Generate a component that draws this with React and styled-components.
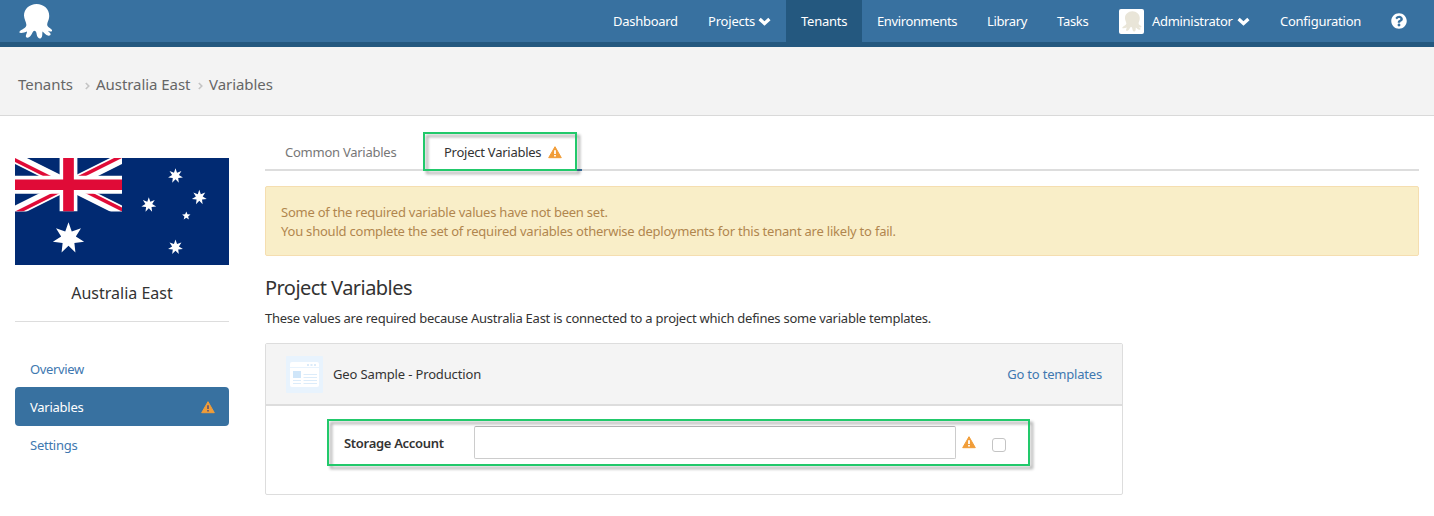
import React from 'react';
import styled, { createGlobalStyle } from 'styled-components';
import { FaQuestionCircle } from 'react-icons/fa';

const Global = createGlobalStyle`
  * { box-sizing: border-box; }
  body {
    margin: 0;
    background: #fff;
    color: #333;
    font-family: 'Noto Sans', 'Open Sans', sans-serif;
    font-size: 13px;
    line-height: 19px;
  }
`;

const Label = styled.span`
  white-space: nowrap;
  letter-spacing: ${(p) => p.$ls || 0}px;
`;

const Page = styled.div`
  position: relative;
  height: 516px;
  overflow: hidden;
`;

const TopBar = styled.header`
  display: flex;
  justify-content: space-between;
  height: 47px;
  padding: 0 12px 0 19px;
  background: #3871a0;
  border-bottom: 5px solid #24587f;
`;

const Logo = styled.svg`
  display: block;
  margin-top: 4px;
`;

const Nav = styled.nav`
  display: flex;
`;

const NavItem = styled.a`
  display: flex;
  align-items: center;
  gap: ${(p) => p.$gap || 3}px;
  width: ${(p) => p.$w}px;
  padding: 0 0 0 15px;
  height: 42px;
  color: #fff;
  background: ${(p) => (p.$active ? '#24587f' : 'transparent')};
`;

const Avatar = styled.span`
  display: flex;
  align-items: center;
  justify-content: center;
  flex: none;
  width: 25px;
  height: 25px;
  margin-right: 4px;
  border-radius: 2px;
  background: #fff;
`;

const CrumbBar = styled.div`
  display: flex;
  align-items: center;
  height: 69px;
  padding: 6px 18px 0;
  background: #f3f3f3;
  border-bottom: 1px solid #d9d9d9;
  color: #666;
  font-size: 15px;
`;

const Crumb = styled.span`
  width: ${(p) => p.$w}px;
  white-space: nowrap;
  letter-spacing: -0.05px;
`;

const Divider = styled.svg`
  flex: none;
  margin-top: 3px;
  margin-right: 6px;
`;

const Body = styled.div`
  display: grid;
  grid-template-columns: 214px 1154px;
  column-gap: 36px;
  padding-left: 15px;
`;

const Sidebar = styled.aside`
  padding-top: 42px;
`;

const TenantName = styled.h2`
  margin: 0;
  height: 57px;
  padding-top: 16px;
  border-bottom: 1px solid #ddd;
  text-align: center;
  font-size: 16px;
  font-weight: 400;
  line-height: 24px;
`;

const Menu = styled.div`
  display: flex;
  flex-direction: column;
  margin-top: 27px;
`;

const MenuItem = styled.a`
  display: flex;
  align-items: center;
  justify-content: space-between;
  height: ${(p) => (p.$active ? 39 : 38)}px;
  padding: 2px 14px 0 15px;
  border-radius: 4px;
  color: ${(p) => (p.$active ? '#fff' : '#4078b0')};
  background: ${(p) => (p.$active ? '#3871a0' : 'transparent')};

  &:last-child {
    padding-top: 0;
  }
`;

const Main = styled.main`
  padding-top: 16px;
`;

const Tabs = styled.div`
  display: flex;
  height: 39px;
  border-bottom: 2px solid #ddd;
`;

const Tab = styled.div`
  display: flex;
  gap: 7px;
  width: ${(p) => p.$w}px;
  height: 39px;
  padding: 11px 0 0 20px;
  color: ${(p) => (p.$active ? '#333' : '#777')};
  border-bottom: 2px solid ${(p) => (p.$active ? '#3871a0' : 'transparent')};
`;

const Alert = styled.div`
  height: 70px;
  margin-top: 15px;
  padding: 16px 15px;
  display: flex;
  flex-direction: column;
  border: 1px solid #f5deb0;
  border-radius: 2px;
  background: #f9eec8;
  color: #b1864e;
`;

const Heading = styled.h1`
  margin: 18px 0 0;
  font-size: 20px;
  font-weight: 400;
  line-height: 28px;
`;

const Intro = styled.p`
  margin: 7px 0 0;
`;

const Panel = styled.section`
  width: 858px;
  height: 152px;
  margin-top: 15px;
  border: 1px solid #ddd;
  border-radius: 2px;
`;

const PanelHead = styled.div`
  display: flex;
  align-items: center;
  height: 62px;
  padding: 0 20px;
  background: #f4f4f4;
  border-bottom: 2px solid #ddd;
`;

const ProjectIcon = styled.svg`
  flex: none;
  margin-right: 10px;
`;

const PanelLink = styled.a`
  margin-left: auto;
  color: #4078b0;
`;

const FieldRow = styled.div`
  display: flex;
  align-items: center;
  padding: 20px 0 0 78px;
`;

const FieldLabel = styled.label`
  width: 130px;
  padding-top: 2px;
  font-weight: 600;
  white-space: nowrap;
  letter-spacing: -0.3px;
`;

const Input = styled.input`
  width: 482px;
  height: 33px;
  margin: 0 6px 0 0;
  border: 1px solid #ccc;
  border-top-color: #b5b5b5;
  border-radius: 2px;
  background: #fff;
`;

const Check = styled.span`
  width: 14px;
  height: 14px;
  margin: 5px 0 0 16px;
  border: 1px solid #c4c4c4;
  border-radius: 3px;
`;

const Highlight = styled.div`
  position: absolute;
  left: ${(p) => p.$x}px;
  top: ${(p) => p.$y}px;
  width: ${(p) => p.$w}px;
  height: ${(p) => p.$h}px;
  border: 2px solid #22c96b;
  filter: drop-shadow(3px 3px 1.5px rgba(0, 0, 0, 0.36));
  pointer-events: none;
`;

const OCTOPUS =
  'M17.600 0C10.500 0 5 5 5 11.500C5 15.500 7.800 18.500 7.300 21.500C6.800 24 3 25.500 1.200 26.800C-0.200 28 0.400 29.300 2.300 29C4.300 28.800 6.300 28.300 8 27.500C8.200 29.500 6.300 31 7 33C8 34.500 10.600 33.700 12 31.300C13.200 29.500 13.700 27 15.500 26.700C17.300 26.900 17.500 29 17.800 31C18.400 33.700 20 34.800 21.500 34.400C23.900 33.500 23.100 29.500 23.500 27.600C25 28.400 26.500 31.300 29.500 31.700C31.700 31.800 32.100 30.200 31.100 29C30.300 28 29.300 27.500 28.800 26.700C30.100 27 32 28.200 33 27C33.600 25.500 31.500 24.700 30 23.500C27.500 21.700 28 19.800 29 17.300C30 15 30.200 13.500 30.200 11.500C30.200 5 24.700 0 17.600 0Z';

function Chevron() {
  return (
    <svg width="13" height="9" viewBox="0 0 13 9">
      <path d="M1.600 2L6.500 6.500L11.400 2" fill="none" stroke="#fff" strokeWidth="3.300" />
    </svg>
  );
}

const WarnSvg = styled.svg`
  flex: none;
  display: block;
  margin-top: ${(p) => p.$mt || 0}px;
`;

function Warning({ mark = '#fff', mt }) {
  return (
    <WarnSvg width="14" height="13" viewBox="0 0 14 13" $mt={mt}>
      <path d="M7 0.700L13.300 11.700H0.700Z" fill="#f19d38" stroke="#f19d38" strokeWidth="1" strokeLinejoin="round" />
      <path d="M6.100 4.300H7.900V7.900H6.100ZM6.100 8.900H7.900V10.600H6.100Z" fill={mark} />
    </WarnSvg>
  );
}

function star(cx, cy, r, n, ratio) {
  const pts = [];
  for (let i = 0; i < n * 2; i += 1) {
    const rad = i % 2 ? r * ratio : r;
    const a = (Math.PI * i) / n - Math.PI / 2;
    pts.push(`${(cx + rad * Math.cos(a)).toFixed(2)},${(cy + rad * Math.sin(a)).toFixed(2)}`);
  }
  return pts.join(' ');
}

const STARS = [
  [53.5, 80.2, 16, 7, 0.47],
  [160.5, 17.8, 7.6, 7, 0.46],
  [133.8, 46.8, 7.6, 7, 0.46],
  [184.3, 39.3, 7.6, 7, 0.46],
  [160.5, 89.2, 7.6, 7, 0.46],
  [171.3, 57.9, 4.4, 5, 0.445],
];

const FlagSvg = styled.svg`
  display: block;
`;

function Flag() {
  return (
    <FlagSvg width="214" height="107" viewBox="0 0 214 107">
      <defs>
        <clipPath id="canton"><path d="M0 0H107V53.500H0Z" /></clipPath>
        <clipPath id="saltire">
          <path d="M53.500 26.750H107V53.500ZM53.500 26.750V53.500H0ZM53.500 26.750H0V0ZM53.500 26.750V0H107Z" />
        </clipPath>
      </defs>
      <rect width="214" height="107" fill="#012a72" />
      <g clipPath="url(#canton)">
        <path d="M0 0L107 53.500M107 0L0 53.500" stroke="#fff" strokeWidth="10.700" />
        <path d="M0 0L107 53.500M107 0L0 53.500" stroke="#e00b37" strokeWidth="7.100" clipPath="url(#saltire)" />
        <path d="M53.500 0V53.500M0 26.750H107" stroke="#fff" strokeWidth="17.800" />
        <path d="M53.500 0V53.500M0 26.750H107" stroke="#e00b37" strokeWidth="10.700" />
      </g>
      {STARS.map((s) => (
        <polygon key={s.join()} points={star(...s)} fill="#fff" />
      ))}
    </FlagSvg>
  );
}

function CrumbArrow() {
  return (
    <Divider width="5" height="8" viewBox="0 0 5 8">
      <path d="M0.800 1L3.800 4L0.800 7" fill="none" stroke="#c4c4c4" strokeWidth="1.600" />
    </Divider>
  );
}

export default function App() {
  return (
    <Page>
      <Global />
      <TopBar>
        <Logo width="34" height="35" viewBox="0 0 34 35"><path d={OCTOPUS} fill="#fff" /></Logo>
        <Nav>
          <NavItem $w={95}><Label $ls={-0.28}>Dashboard</Label></NavItem>
          <NavItem $w={93}><Label $ls={-0.2}>Projects</Label><Chevron /></NavItem>
          <NavItem $w={76} $active><Label $ls={-0.25}>Tenants</Label></NavItem>
          <NavItem $w={110}><Label $ls={-0.38}>Environments</Label></NavItem>
          <NavItem $w={70}><Label $ls={-0.35}>Library</Label></NavItem>
          <NavItem $w={62}><Label $ls={-0.3}>Tasks</Label></NavItem>
          <NavItem $w={161} $gap={4}>
            <Avatar>
              <svg width="20" height="21" viewBox="0 0 34 35"><path d={OCTOPUS} fill="#e9e5d8" /></svg>
            </Avatar>
            <Label $ls={-0.3}>Administrator</Label>
            <Chevron />
          </NavItem>
          <NavItem $w={111}><Label $ls={-0.25}>Configuration</Label></NavItem>
          <NavItem $w={46}><FaQuestionCircle size={16} /></NavItem>
        </Nav>
      </TopBar>
      <CrumbBar>
        <Crumb $w={67}>Tenants</Crumb>
        <CrumbArrow />
        <Crumb $w={102}>Australia East</Crumb>
        <CrumbArrow />
        <Crumb>Variables</Crumb>
      </CrumbBar>
      <Body>
        <Sidebar>
          <Flag />
          <TenantName><Label>Australia East</Label></TenantName>
          <Menu>
            <MenuItem><Label $ls={-0.35}>Overview</Label></MenuItem>
            <MenuItem $active><Label $ls={-0.25}>Variables</Label><Warning mark="#6b5a6e" /></MenuItem>
            <MenuItem><Label $ls={-0.25}>Settings</Label></MenuItem>
          </Menu>
        </Sidebar>
        <Main>
          <Tabs>
            <Tab $w={159}><Label $ls={-0.25}>Common Variables</Label></Tab>
            <Tab $w={158} $active><Label $ls={-0.25}>Project Variables</Label><Warning mt={3} /></Tab>
          </Tabs>
          <Alert>
            <Label $ls={-0.23}>Some of the required variable values have not been set.</Label>
            <Label $ls={-0.217}>You should complete the set of required variables otherwise deployments for this tenant are likely to fail.</Label>
          </Alert>
          <Heading><Label $ls={-0.55}>Project Variables</Label></Heading>
          <Intro><Label $ls={-0.245}>These values are required because Australia East is connected to a project which defines some variable templates.</Label></Intro>
          <Panel>
            <PanelHead>
              <ProjectIcon width="37" height="37" viewBox="0 0 37 37">
                <rect width="37" height="37" rx="1" fill="#e8f3fd" />
                <rect x="4" y="6" width="29" height="25" rx="2" fill="#fff" />
                <path d="M4 11.500H33" stroke="#e8f3fd" />
                <path d="M21 9H23M24.500 9H26.500M28 9H30" stroke="#dcebf9" strokeWidth="2" />
                <rect x="7" y="15" width="8" height="7" fill="#d0e6f9" />
                <path d="M7 24.500H15M7 27.500H15M17.500 18.500H31M17.500 21.500H31M17.500 24.500H31M17.500 27.500H31" stroke="#dcecfa" />
              </ProjectIcon>
              <Label $ls={-0.14}>Geo Sample - Production</Label>
              <PanelLink><Label $ls={-0.2}>Go to templates</Label></PanelLink>
            </PanelHead>
            <FieldRow>
              <FieldLabel>Storage Account</FieldLabel>
              <Input />
              <Warning />
              <Check />
            </FieldRow>
          </Panel>
        </Main>
      </Body>
      <Highlight $x={423} $y={132} $w={154} $h={39} />
      <Highlight $x={327} $y={419} $w={703} $h={47} />
    </Page>
  );
}
